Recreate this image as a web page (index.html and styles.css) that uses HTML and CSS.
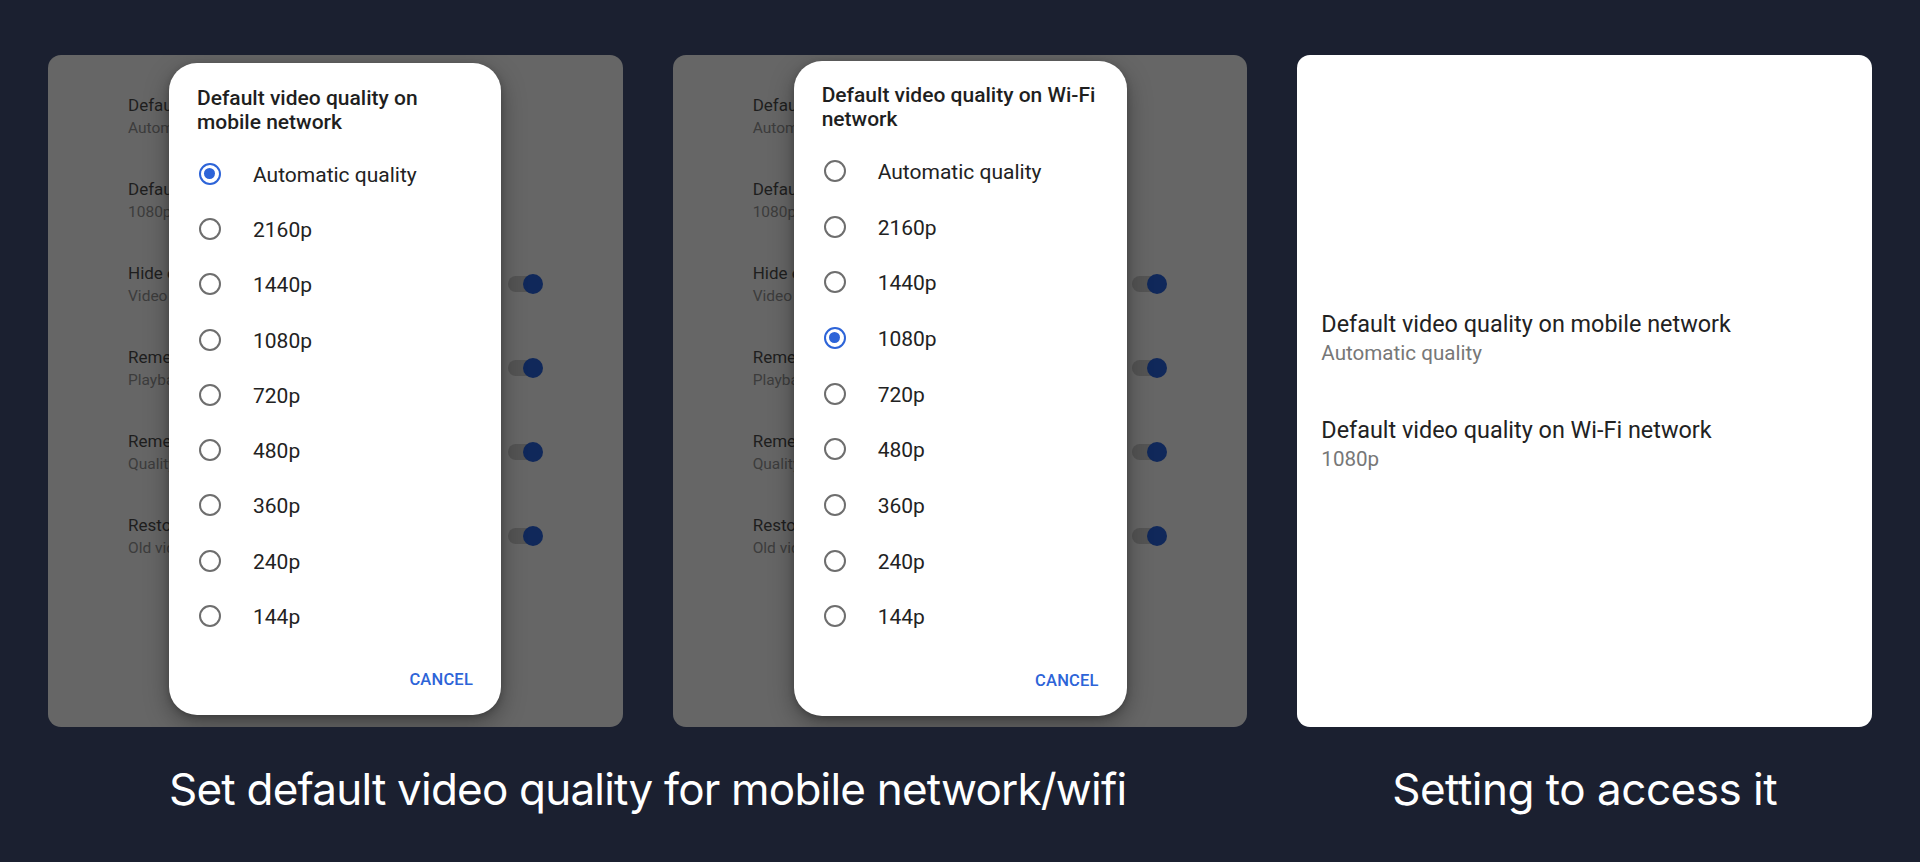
FILE: index.html
```html
<!DOCTYPE html>
<html lang="en">
<head>
<meta charset="utf-8">
<title>Default video quality</title>
<link rel="stylesheet" href="styles.css">
</head>
<body>
<main class="stage">
  <section class="panel panel-dim">
    <div class="settings">
      <div class="set-row"><div class="set-text"><div class="set-title">Default video quality on mobile network</div><div class="set-sub">Automatic quality</div></div></div>
      <div class="set-row"><div class="set-text"><div class="set-title">Default video quality on Wi-Fi network</div><div class="set-sub">1080p</div></div></div>
      <div class="set-row"><div class="set-text"><div class="set-title">Hide end screens</div><div class="set-sub">Video end screens are hidden</div></div><span class="toggle"></span></div>
      <div class="set-row"><div class="set-text"><div class="set-title">Remember speed</div><div class="set-sub">Playback speed is saved</div></div><span class="toggle"></span></div>
      <div class="set-row"><div class="set-text"><div class="set-title">Remember quality</div><div class="set-sub">Quality changes are saved</div></div><span class="toggle"></span></div>
      <div class="set-row"><div class="set-text"><div class="set-title">Restore old layout</div><div class="set-sub">Old video quality menu</div></div><span class="toggle"></span></div>
    </div>
    <div class="dialog dialog-a">
      <h2 class="dialog-title">Default video quality on mobile network</h2>
      <ul class="options">
        <li class="option"><span class="radio radio-on"></span><span class="opt-label">Automatic quality</span></li>
        <li class="option"><span class="radio"></span><span class="opt-label">2160p</span></li>
        <li class="option"><span class="radio"></span><span class="opt-label">1440p</span></li>
        <li class="option"><span class="radio"></span><span class="opt-label">1080p</span></li>
        <li class="option"><span class="radio"></span><span class="opt-label">720p</span></li>
        <li class="option"><span class="radio"></span><span class="opt-label">480p</span></li>
        <li class="option"><span class="radio"></span><span class="opt-label">360p</span></li>
        <li class="option"><span class="radio"></span><span class="opt-label">240p</span></li>
        <li class="option"><span class="radio"></span><span class="opt-label">144p</span></li>
      </ul>
      <div class="dialog-actions"><span class="btn-text">CANCEL</span></div>
    </div>
  </section>

  <section class="panel panel-dim">
    <div class="settings">
      <div class="set-row"><div class="set-text"><div class="set-title">Default video quality on mobile network</div><div class="set-sub">Automatic quality</div></div></div>
      <div class="set-row"><div class="set-text"><div class="set-title">Default video quality on Wi-Fi network</div><div class="set-sub">1080p</div></div></div>
      <div class="set-row"><div class="set-text"><div class="set-title">Hide end screens</div><div class="set-sub">Video end screens are hidden</div></div><span class="toggle"></span></div>
      <div class="set-row"><div class="set-text"><div class="set-title">Remember speed</div><div class="set-sub">Playback speed is saved</div></div><span class="toggle"></span></div>
      <div class="set-row"><div class="set-text"><div class="set-title">Remember quality</div><div class="set-sub">Quality changes are saved</div></div><span class="toggle"></span></div>
      <div class="set-row"><div class="set-text"><div class="set-title">Restore old layout</div><div class="set-sub">Old video quality menu</div></div><span class="toggle"></span></div>
    </div>
    <div class="dialog dialog-b">
      <h2 class="dialog-title">Default video quality on Wi-Fi network</h2>
      <ul class="options">
        <li class="option"><span class="radio"></span><span class="opt-label">Automatic quality</span></li>
        <li class="option"><span class="radio"></span><span class="opt-label">2160p</span></li>
        <li class="option"><span class="radio"></span><span class="opt-label">1440p</span></li>
        <li class="option"><span class="radio radio-on"></span><span class="opt-label">1080p</span></li>
        <li class="option"><span class="radio"></span><span class="opt-label">720p</span></li>
        <li class="option"><span class="radio"></span><span class="opt-label">480p</span></li>
        <li class="option"><span class="radio"></span><span class="opt-label">360p</span></li>
        <li class="option"><span class="radio"></span><span class="opt-label">240p</span></li>
        <li class="option"><span class="radio"></span><span class="opt-label">144p</span></li>
      </ul>
      <div class="dialog-actions"><span class="btn-text">CANCEL</span></div>
    </div>
  </section>

  <section class="panel panel-light">
    <div class="prefs">
      <div class="pref">
        <div class="pref-title">Default video quality on mobile network</div>
        <div class="pref-sub">Automatic quality</div>
      </div>
      <div class="pref">
        <div class="pref-title">Default video quality on Wi-Fi network</div>
        <div class="pref-sub">1080p</div>
      </div>
    </div>
  </section>

  <p class="caption caption-wide">Set default video quality for mobile network/wifi</p>
  <p class="caption">Setting to access it</p>
</main>
</body>
</html>
```

FILE: styles.css
```css
html, body {
  margin: 0;
  padding: 0;
}

body {
  background: #1b2030;
  width: 1920px;
  height: 862px;
  overflow: hidden;
  font-family: Roboto, "Liberation Sans", sans-serif;
}

.stage {
  display: grid;
  grid-template-columns: repeat(3, 1fr);
  grid-template-rows: 672px auto;
  column-gap: 50px;
  padding: 55px 48px 0;
}

.panel {
  position: relative;
  border-radius: 13px;
  overflow: hidden;
}

.panel-dim {
  background: #666666;
}

.panel-light {
  background: #ffffff;
}

/* background settings list (dimmed, partly hidden by the dialog) */
.settings {
  display: flex;
  flex-direction: column;
  gap: 38px;
  padding: 39px 80px 0 80px;
}

.set-row {
  display: flex;
  align-items: center;
  justify-content: space-between;
  height: 46px;
}

.set-text {
  white-space: nowrap;
}

.set-title {
  font-size: 17px;
  line-height: 22px;
  color: #1e1e1e;
}

.set-sub {
  font-size: 15.5px;
  line-height: 24px;
  color: #3c3c3c;
}

.toggle {
  position: relative;
  flex: none;
  width: 34px;
  height: 16px;
  border-radius: 8px;
  background: #545454;
  margin-top: -2px;
  margin-right: 1px;
}

.toggle::after {
  content: "";
  position: absolute;
  right: -1px;
  top: -2px;
  width: 20px;
  height: 20px;
  border-radius: 50%;
  background: #10285a;
}

/* dialog */
.dialog {
  position: absolute;
  left: 121px;
  display: flex;
  flex-direction: column;
  background: #ffffff;
  border-radius: 28px;
  box-shadow: 0 8px 24px rgba(0, 0, 0, 0.35), 0 2px 6px rgba(0, 0, 0, 0.2);
  box-sizing: border-box;
}

.dialog-a {
  top: 8px;
  width: 332px;
  height: 652px;
}

.dialog-b {
  top: 6px;
  width: 333px;
  height: 655px;
}

.dialog-title {
  margin: 0;
  padding: 23px 28px 0 28px;
  font-size: 21px;
  font-weight: 500;
  line-height: 23.5px;
  color: #1f1f1f;
}

.dialog-a .dialog-title {
  padding-top: 24px;
}

.options {
  list-style: none;
  margin: 12px 0 0 0;
  padding: 0 0 0 30px;
}

.option {
  display: flex;
  align-items: center;
  height: 55.3px;
}

.dialog-b .option {
  height: 55.7px;
}

.radio {
  position: relative;
  flex: none;
  width: 22px;
  height: 22px;
  box-sizing: border-box;
  border: 2.5px solid #6e6e6e;
  border-radius: 50%;
  margin-right: 32px;
}

.radio-on {
  border-color: #2d64d8;
}

.radio-on::after {
  content: "";
  position: absolute;
  left: 3px;
  top: 3px;
  width: 11px;
  height: 11px;
  border-radius: 50%;
  background: #2d64d8;
}

.opt-label {
  font-size: 21px;
  line-height: 24px;
  color: #222222;
  padding-top: 2px;
}

.dialog-actions {
  margin-top: auto;
  display: flex;
  justify-content: flex-end;
  padding: 0 28px 25px 0;
}

.btn-text {
  font-size: 16.5px;
  font-weight: 500;
  line-height: 20px;
  color: #2d64d8;
  letter-spacing: 0.2px;
}

/* light panel */
.prefs {
  display: flex;
  flex-direction: column;
  gap: 48px;
  padding: 255px 24px 0 24px;
}

.pref-title {
  font-size: 23.4px;
  line-height: 29px;
  color: #222222;
}

.pref-sub {
  font-size: 20.6px;
  line-height: 29px;
  color: #777777;
}

/* captions */
.caption {
  margin: 40px 0 0 0;
  text-align: center;
  font-family: Inter, "Liberation Sans", sans-serif;
  font-size: 44px;
  line-height: 44px;
  font-weight: 400;
  color: #ffffff;
  letter-spacing: -0.5px;
}

.caption-wide {
  grid-column: 1 / 3;
  letter-spacing: -0.8px;
}
```
